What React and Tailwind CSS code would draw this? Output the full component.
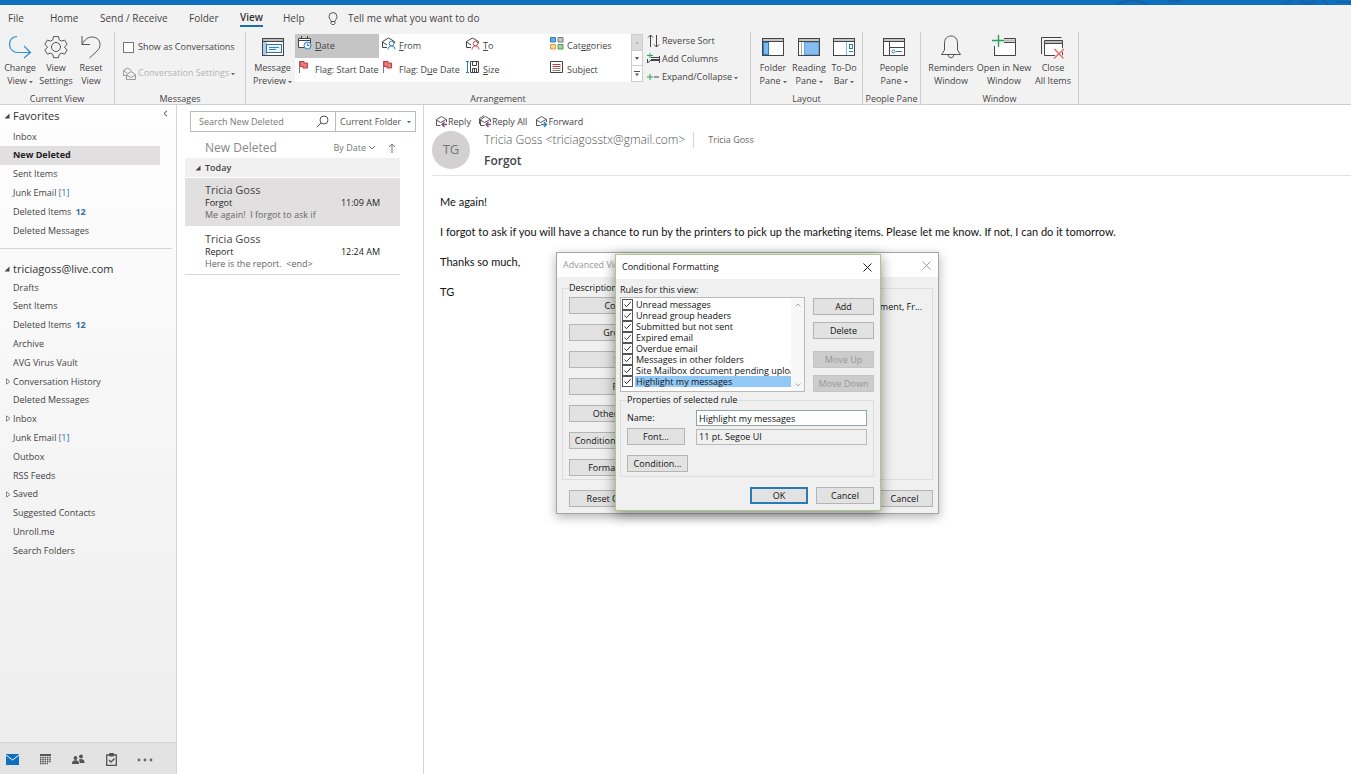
import React from "react";

const favorites = [
  { name: "Inbox" },
  { name: "New Deleted", active: true },
  { name: "Sent Items" },
  { name: "Junk Email", draft: "[1]" },
  { name: "Deleted Items", unread: "12" },
  { name: "Deleted Messages" },
];

const accountFolders = [
  { name: "Drafts" },
  { name: "Sent Items" },
  { name: "Deleted Items", unread: "12" },
  { name: "Archive" },
  { name: "AVG Virus Vault" },
  { name: "Conversation History", expandable: true },
  { name: "Deleted Messages" },
  { name: "Inbox", expandable: true },
  { name: "Junk Email", draft: "[1]" },
  { name: "Outbox" },
  { name: "RSS Feeds" },
  { name: "Saved", expandable: true },
  { name: "Suggested Contacts" },
  { name: "Unroll.me" },
  { name: "Search Folders" },
];

const messages = [
  {
    from: "Tricia Goss",
    subject: "Forgot",
    time: "11:09 AM",
    preview: "Me again!  I forgot to ask if",
    active: true,
  },
  {
    from: "Tricia Goss",
    subject: "Report",
    time: "12:24 AM",
    preview: "Here is the report.  <end>",
  },
];

const rules = [
  "Unread messages",
  "Unread group headers",
  "Submitted but not sent",
  "Expired email",
  "Overdue email",
  "Messages in other folders",
  "Site Mailbox document pending upload",
  "Highlight my messages",
];

const viewSettings = [
  "Columns...",
  "Group By...",
  "Sort...",
  "Filter...",
  "Other Settings...",
  "Conditional Formatting...",
  "Format Columns...",
];

const Caret = () => (
  <svg className="ml-0.5 inline-block h-1 w-1" viewBox="0 0 4 4">
    <path d="M0 1h4L2 3.2z" fill="#666" />
  </svg>
);

/* ---------- ribbon icons ---------- */

const ChangeViewIcon = () => (
  <svg width="24" height="24" viewBox="0 0 24 24" fill="none" stroke="#2f8fcf" strokeWidth="1.200">
    <path d="M9 1.500C4 2 1.500 5.500 1.500 9.500c0 5 4 8 8.500 8h12M16 11l6.500 6.500L16 23" />
  </svg>
);

const GearIcon = () => (
  <svg width="24" height="24" viewBox="0 0 24 24" fill="none" stroke="#555">
    <path
      strokeLinejoin="round"
      d="M9.500 1.500h5l.7 3.300 2.300 1.300 3.200-1 2.500 4.300-2.500 2.200v1l2.500 2.200-2.500 4.300-3.200-1-2.300 1.300-.7 3.300h-5l-.7-3.300-2.300-1.300-3.200 1L.8 14.800l2.500-2.200v-1L.8 9.400l2.500-4.300 3.200 1 2.300-1.300z"
    />
    <circle cx="12" cy="12" r="4.500" />
  </svg>
);

const ResetIcon = () => (
  <svg width="24" height="24" viewBox="0 0 24 24" fill="none" stroke="#555">
    <path d="M3 1v8.500h8M3 9.500C6 4 9 2 13.500 2 18 2 21 5.500 21 9.500c0 3-1 4.500-3 6.500l-7.500 7" />
  </svg>
);

const PreviewIcon = () => (
  <svg width="24" height="24" viewBox="0 0 24 24" fill="none" stroke="#444">
    <rect x="1.500" y="3.500" width="21" height="17" fill="#fff" />
    <path d="M2 4h20v2.500H2z" fill="#bbb" stroke="none" />
    <path d="M1.500 6.500h21" />
    <path d="M2 7h4v13H2z" fill="#a9cdee" stroke="none" />
    <rect x="5.500" y="9.500" width="15" height="8" fill="#e9f4fc" stroke="#3d6f93" />
    <path d="M8 12.500h10M8 14.500h7" stroke="#2b8cc4" />
  </svg>
);

const PaneIcon = ({ kind }) => (
  <svg width="24" height="24" viewBox="0 0 24 24" fill="none" stroke="#444">
    <rect x="1.500" y="3.500" width="21" height="17" fill="#fff" />
    <path d="M2 4h20v2.500H2z" fill="#c4c4c4" stroke="none" />
    <path d="M1.500 6.500h21" />
    {kind === "folder" && (
      <rect x="2.500" y="7.500" width="5" height="12" fill="#7cb7ee" stroke="#2b7fc0" />
    )}
    {kind === "reading" && (
      <g stroke="#69a5da">
        <rect x="7.500" y="7.500" width="14" height="12" fill="#85bdf2" />
        <path d="M4.500 7v13" stroke="#aaa" />
      </g>
    )}
    {kind === "todo" && (
      <g stroke="#2f7f9f">
        <path d="M14.500 7v13" stroke="#7cb7ee" />
        <rect x="17.500" y="9.500" width="3" height="4" />
        <path d="M17 16.500h4" />
      </g>
    )}
    {kind === "people" && (
      <g>
        <path d="M7.500 7v13M8 12.500h14" />
        <circle cx="11.500" cy="16.500" r="1.500" stroke="#2b7fc0" />
        <path d="M14 16.500h6" stroke="#2b7fc0" />
      </g>
    )}
  </svg>
);

const BellIcon = () => (
  <svg width="24" height="24" viewBox="0 0 24 24" fill="none" stroke="#555">
    <path
      strokeLinejoin="round"
      d="M2.500 19.500h19l-3-4.500V8c0-4-2.500-7-6.500-7S5.500 4 5.500 8v7zM9 19.800c.3 1.800 1.500 3 3 3s2.700-1.200 3-3"
    />
  </svg>
);

const NewWindowIcon = () => (
  <svg width="26" height="24" viewBox="0 0 26 24" fill="none" stroke="#444">
    <path d="M3.500 20.500V10h9V7h11.500v13z" fill="#fff" stroke="none" />
    <path d="M13 5.500h11" stroke="#bbb" strokeWidth="2" />
    <path d="M13 7.500h11.500M3.500 20.500V11M3 20.500h21.500v-17H13" />
    <path d="M7.500 0v12M1 5.500h12" stroke="#27a35a" strokeWidth="1.400" />
  </svg>
);

const CloseAllIcon = () => (
  <svg width="26" height="24" viewBox="0 0 26 24" fill="none" stroke="#444">
    <path d="M1.500 19V2.500h20" />
    <path d="M4.500 5.500h18v15h-18z" fill="#fff" />
    <path d="M5 6h17v2.500H5z" fill="#bbb" stroke="none" />
    <path d="M4.500 8.500h18" />
    <path d="M14.500 13.500l9 10M24 13.500l-10 10" stroke="#f3f2f2" strokeWidth="3" />
    <path d="M14.500 14l9 9.500M24 14l-10 9.500" stroke="#e2706c" strokeWidth="1.300" />
  </svg>
);

const DateIcon = () => (
  <svg width="14" height="14" viewBox="0 0 14 14" fill="none" stroke="#444">
    <path d="M.5 2.500h12v9H.5z" fill="#fff" />
    <path d="M.5 4.500h12M3.500 0v3M9.500 0v3" />
    <circle cx="9.500" cy="9.500" r="3.500" fill="#e8f3fb" stroke="#2b7fc0" />
    <path d="M9.500 7.500v2h2" stroke="#2b7fc0" />
  </svg>
);

const PersonMailIcon = ({ color }) => (
  <svg width="14" height="13" viewBox="0 0 14 13" fill="none" stroke="#444">
    <path d="M5 10.500H.5V4.500L6.500 1l6 3.500V6M.5 5L5 8" />
    <circle cx="9.500" cy="6.500" r="2.300" fill="#fff" stroke={color} />
    <path d="M6 12.500c0-2 1.500-3.500 3.500-3.500s3.500 1.500 3.500 3.500" stroke={color} />
  </svg>
);

const CategoriesIcon = () => (
  <svg width="14" height="13" viewBox="0 0 14 13">
    <path d="M.5.5h5v4.500h-5z" fill="#6aabde" stroke="#2b7fc0" />
    <path d="M8 .5h5v4.500H8z" fill="#c9c9c9" stroke="#777" />
    <path d="M.5 7.500h5V12h-5z" fill="#f8d79a" stroke="#d99a3e" />
    <path d="M8 7.500h5V12H8z" fill="#a5d39b" stroke="#4f9a55" />
  </svg>
);

const FlagIcon = () => (
  <svg width="14" height="14" viewBox="0 0 14 14" fill="none">
    <path d="M1.500 1v12" stroke="#777" />
    <path d="M2 1.500h4v1.500h3.500V8H5V6.500H2z" fill="#ea7a7a" stroke="#c53a3f" />
  </svg>
);

const SizeIcon = () => (
  <svg width="14" height="14" viewBox="0 0 14 14" fill="none">
    <path d="M1.500 2v10" stroke="#2b7fc0" />
    <path d="M0 1.500h3M0 12.500h3" stroke="#2b7fc0" />
    <path d="M4.500 1.500h8v11h-8z" fill="#fff" stroke="#444" />
    <path d="M6.500 2v3.500h4V2M6.500 12V8.500h4V12M8.500 9v3" stroke="#444" />
  </svg>
);

const SubjectIcon = () => (
  <svg width="14" height="13" viewBox="0 0 14 13" fill="none">
    <path d="M.5.5h12v11H.5z" fill="#fff" stroke="#444" />
    <path d="M2.500 3.500h8M2.500 5.500h8" stroke="#c53a3f" />
    <path d="M2.500 7.500h8M2.500 9.500h8" stroke="#888" />
  </svg>
);

const SortIcon = () => (
  <svg width="13" height="14" viewBox="0 0 13 14" fill="none" stroke="#444">
    <path d="M3.500 13V1M1 3.500L3.500 1 6 3.500M9.500 1v12M7 10.500L9.500 13 12 10.500" />
  </svg>
);

const AddColumnsIcon = () => (
  <svg width="13" height="12" viewBox="0 0 13 12" fill="none">
    <path d="M4 4.500h8M4 6.500h8M1 9.500l2.500-2H12M12.500 3v7M.5 6v4" stroke="#444" />
    <path d="M3 0v5M0 2.500h6" stroke="#27a35a" />
  </svg>
);

const PlusMinusIcon = () => (
  <svg width="13" height="8" viewBox="0 0 13 8" fill="none">
    <path d="M3 1v6M0 4h6" stroke="#27a35a" />
    <path d="M7 4h5" stroke="#444" />
  </svg>
);

const ConversationIcon = () => (
  <svg width="13" height="13" viewBox="0 0 13 13" fill="none" stroke="#999">
    <path d="M3 8.500H.5V3.500L4.500 1l4 2.500M1 4l3 2" />
    <path d="M3.500 7.500L8 4.500l4.500 3v5h-9zM3.500 8L8 10.500 12.500 8" />
  </svg>
);

const MailActionIcon = ({ color, double, forward }) => (
  <svg width="13" height="13" viewBox="0 0 13 13" fill="none" stroke="#555">
    <path d="M5.500 10.500h-4V4.500L6.500 1.500l5 3V7M1.500 5l4 2.500 5.500-3" />
    {double && <path d="M.5 9V3.500L5 .5" />}
    {forward ? (
      <path d="M6 9.500h5M9 7l2.500 2.500L9 12" stroke={color} strokeWidth="1.300" />
    ) : (
      <path d="M12 9.500H7.500M9.500 7L7 9.500 9.500 12" stroke={color} strokeWidth="1.300" />
    )}
  </svg>
);

/* ---------- ribbon ---------- */

const RibbonGroup = ({ label, className, children }) => (
  <div
    className={`flex shrink-0 flex-col border-r border-[#cfcece] ${className}`}
  >
    <div className="flex h-[56px]">{children}</div>
    <div className="mt-auto whitespace-nowrap text-center text-[9px] leading-[11px] text-[#444]">
      {label}
    </div>
  </div>
);

const BigButton = ({ icon, line1, line2, caret, className = "w-9" }) => (
  <button
    className={`flex shrink-0 flex-col items-center whitespace-nowrap text-[9px] leading-[13px] text-[#444] ${className}`}
  >
    <span className="flex h-[29px] items-center">{icon}</span>
    <span>{line1}</span>
    <span>
      {line2}
      {caret && <Caret />}
    </span>
  </button>
);

const GalleryItem = ({ icon, children, active }) => (
  <button
    className={`flex items-center gap-[3px] whitespace-nowrap pl-[3px] text-left text-[9px] text-[#444] ${
      active ? "bg-[#c6c5c5]" : ""
    }`}
  >
    <span className="shrink-0 pb-1.5">{icon}</span>
    <span>{children}</span>
  </button>
);

const Ribbon = () => (
  <div className="flex h-[74px] border-b border-[#d0cfcf] bg-[#f3f2f2] pt-px">
    <RibbonGroup label="Current View" className="w-[115px]">
      <div className="flex">
        <BigButton icon={<ChangeViewIcon />} line1="Change" line2="View" caret className="w-10" />
        <BigButton icon={<GearIcon />} line1="View" line2="Settings" className="w-8" />
        <BigButton icon={<ResetIcon />} line1="Reset" line2="View" className="w-[38px]" />
      </div>
    </RibbonGroup>

    <RibbonGroup label="Messages" className="w-[131px]">
      <div className="flex flex-col gap-3 pl-2 pt-2 text-[9px] leading-[14px]">
        <label className="flex items-center gap-1 whitespace-nowrap text-[#444]">
          <input
            type="checkbox"
            className="h-[11px] w-[11px] appearance-none border border-[#777] bg-white"
          />
          Show as Conversations
        </label>
        <button
          disabled
          className="flex items-center gap-0.5 whitespace-nowrap text-[#b3b2b2]"
        >
          <ConversationIcon />
          <span>
            Conversation Settings
            <Caret />
          </span>
        </button>
      </div>
    </RibbonGroup>

    <RibbonGroup label="Arrangement" className="w-[505px]">
      <BigButton
        icon={<PreviewIcon />}
        line1="Message"
        line2="Preview"
        caret
        className="ml-1 w-[45px]"
      />
      <div className="mt-0.5 flex h-12 bg-white">
        <div className="grid grid-cols-[84px_84px_84px_84px] grid-rows-2">
          <GalleryItem icon={<DateIcon />} active>
            <u>D</u>ate
          </GalleryItem>
          <GalleryItem icon={<PersonMailIcon color="#2b7fc0" />}>
            <u>F</u>rom
          </GalleryItem>
          <GalleryItem icon={<PersonMailIcon color="#d9484e" />}>
            <u>T</u>o
          </GalleryItem>
          <GalleryItem icon={<CategoriesIcon />}>
            Cat<u>e</u>gories
          </GalleryItem>
          <GalleryItem icon={<FlagIcon />}>
            Fla<u>g</u>: Start Date
          </GalleryItem>
          <GalleryItem icon={<FlagIcon />}>
            Flag: D<u>u</u>e Date
          </GalleryItem>
          <GalleryItem icon={<SizeIcon />}>
            <u>S</u>ize
          </GalleryItem>
          <GalleryItem icon={<SubjectIcon />}>
            Sub<u>j</u>ect
          </GalleryItem>
        </div>
        <div className="flex w-3 flex-col border border-[#cfcece]">
          <button
            aria-label="Scroll up"
            className="flex flex-1 items-center justify-center bg-[#dcdbdb]"
          >
            <svg width="4" height="3" viewBox="0 0 4 3">
              <path d="M0 3h4L2 0z" fill="#bbb" />
            </svg>
          </button>
          <button
            aria-label="Scroll down"
            className="flex flex-1 items-center justify-center border-y border-[#cfcece]"
          >
            <svg width="4" height="3" viewBox="0 0 4 3">
              <path d="M0 0h4L2 3z" fill="#555" />
            </svg>
          </button>
          <button aria-label="More" className="flex flex-1 items-center justify-center">
            <svg width="6" height="6" viewBox="0 0 6 6">
              <path d="M0 .5h6" stroke="#555" />
              <path d="M1 2.500h4L3 5z" fill="#555" />
            </svg>
          </button>
        </div>
      </div>
      <div className="ml-1 flex flex-col text-[9px] leading-[18px] text-[#444]">
        <button className="flex items-center gap-0.5 whitespace-nowrap">
          <SortIcon />
          Reverse Sort
        </button>
        <button className="flex items-center gap-0.5 whitespace-nowrap">
          <AddColumnsIcon />
          Add Columns
        </button>
        <button className="flex items-center gap-0.5 whitespace-nowrap">
          <PlusMinusIcon />
          <span>
            Expand/Collapse
            <Caret />
          </span>
        </button>
      </div>
    </RibbonGroup>

    <RibbonGroup label="Layout" className="w-[112px]">
      <div className="flex pl-1">
        <BigButton icon={<PaneIcon kind="folder" />} line1="Folder" line2="Pane" caret />
        <BigButton icon={<PaneIcon kind="reading" />} line1="Reading" line2="Pane" caret />
        <BigButton
          icon={<PaneIcon kind="todo" />}
          line1="To-Do"
          line2="Bar"
          caret
          className="w-[34px]"
        />
      </div>
    </RibbonGroup>

    <RibbonGroup label="People Pane" className="w-[58px]">
      <BigButton
        icon={<PaneIcon kind="people" />}
        line1="People"
        line2="Pane"
        caret
        className="ml-2 w-[46px]"
      />
    </RibbonGroup>

    <RibbonGroup label="Window" className="w-[158px]">
      <BigButton icon={<BellIcon />} line1="Reminders" line2="Window" className="ml-1 w-[52px]" />
      <BigButton icon={<NewWindowIcon />} line1="Open in New" line2="Window" className="w-[54px]" />
      <BigButton icon={<CloseAllIcon />} line1="Close" line2="All Items" className="w-[44px]" />
    </RibbonGroup>
  </div>
);

const TitleBar = () => (
  <div className="flex h-[5px] justify-end bg-[#106ebe]">
    <svg width="236" height="5" viewBox="0 0 236 5" fill="none" stroke="#1263a8" strokeWidth="2">
      <path d="M2 5c6-6 24-6 30 0M52 1h14M168 5l8-5M186 1c4 4 10 4 14 0M208 0l6 5M222 2h14" />
    </svg>
  </div>
);

const TabBar = () => (
  <nav className="flex h-[26px] items-center bg-[#f3f2f2] pl-2 text-[10px] text-[#444]">
    <a href="#file" className="w-[42px]">File</a>
    <a href="#home" className="w-[50px]">Home</a>
    <a href="#send" className="w-[89px] whitespace-nowrap">Send / Receive</a>
    <a href="#folder" className="w-[51px]">Folder</a>
    <a
      href="#view"
      className="flex h-[18px] items-center border-b-2 border-[#1a6fb0] font-semibold text-[#333]"
    >
      View
    </a>
    <a href="#help" className="ml-5 w-[45px]">Help</a>
    <svg width="10" height="13" viewBox="0 0 10 13" fill="none" stroke="#555">
      <path d="M3 9.500C3 7.500 1 7 1 4.500A4 4 0 015 .6a4 4 0 014 3.900C9 7 7 7.500 7 9.500zM3 10v1.500l1 1h2l1-1V10" />
    </svg>
    <button className="ml-2.5 whitespace-nowrap">Tell me what you want to do</button>
  </nav>
);

/* ---------- folder pane ---------- */

const FolderRow = ({ folder }) => (
  <a
    href="#folder"
    className={`mr-4 flex items-center whitespace-nowrap text-[9px] ${
      folder.active ? "bg-[#e1dfdf] font-bold text-[#222]" : "text-[#444]"
    }`}
  >
    <span className="flex w-[13px] shrink-0 pl-1.5">
      {folder.expandable && (
        <svg width="5" height="7" viewBox="0 0 5 7" fill="none" stroke="#888">
          <path d="M.5.8v5.400L4 3.500z" />
        </svg>
      )}
    </span>
    {folder.name}
    {folder.draft && <span className="ml-0.5 text-[#35719c]">{folder.draft}</span>}
    {folder.unread && (
      <span className="ml-1 font-bold text-[#35719c]">{folder.unread}</span>
    )}
  </a>
);

const SectionHeader = ({ children }) => (
  <h2 className="flex items-center gap-[3px] pl-1 text-[11px] leading-4 text-[#333]">
    <svg width="6" height="6" viewBox="0 0 6 6">
      <path d="M5.500.5v5h-5z" fill="#444" />
    </svg>
    {children}
  </h2>
);

const FolderPane = () => (
  <aside className="flex w-[177px] shrink-0 flex-col border-r border-[#d6d5d5] bg-linear-to-b from-[#fefefe] to-[#eeeded]">
    <div className="flex items-start justify-between pr-2 pt-[3px]">
      <SectionHeader>Favorites</SectionHeader>
      <button aria-label="Minimize folder pane" className="pt-0.5">
        <svg width="5" height="7" viewBox="0 0 5 7" fill="none" stroke="#444">
          <path d="M4 .8L1 3.500 4 6.200" />
        </svg>
      </button>
    </div>
    <nav className="mt-[3px] grid h-[113px] auto-rows-fr">
      {favorites.map((f) => (
        <FolderRow key={f.name} folder={f} />
      ))}
    </nav>
    <div className="mr-1 mt-2 border-t border-[#d6d5d5]" />
    <div className="mt-3">
      <SectionHeader>triciagoss@live.com</SectionHeader>
    </div>
    <nav className="mt-px grid h-[282px] auto-rows-fr">
      {accountFolders.map((f) => (
        <FolderRow key={f.name} folder={f} />
      ))}
    </nav>
    <div className="mt-auto flex h-8 items-center gap-5 border-t border-[#d8d7d7] bg-[#e4e3e3] pl-1.5 pt-0.5">
      <button aria-label="Mail">
        <svg width="13" height="11" viewBox="0 0 13 11">
          <path d="M0 0h13v11H0z" fill="#106ebe" />
          <path d="M0 1l6.500 5L13 1" fill="none" stroke="#fff" />
        </svg>
      </button>
      <button aria-label="Calendar">
        <svg width="13" height="11" viewBox="0 0 13 11" stroke="#555" fill="none">
          <path d="M1 1h11" strokeWidth="2" />
          <path
            d="M1 3.500h11M1 5.500h11M1 7.500h11M1 9.500h8"
            strokeDasharray="1.500 .8"
            strokeWidth="1.300"
          />
        </svg>
      </button>
      <button aria-label="People">
        <svg width="13" height="11" viewBox="0 0 13 11" fill="#555">
          <circle cx="3.500" cy="4" r="1.900" />
          <path d="M0 10c0-3 1.500-3.700 3.500-3.700S7 7 7 10z" />
          <circle cx="9" cy="2.500" r="1.900" />
          <path d="M7 5.500c1-.8 5-1.200 5.500 2.500v1H7.800z" />
        </svg>
      </button>
      <button aria-label="Tasks">
        <svg width="12" height="13" viewBox="0 0 12 13" fill="none" stroke="#555">
          <path d="M4 2H1.700v10.300h9.600V2H9" strokeWidth="1.300" />
          <path d="M4.500.5h4V3h-4z" fill="#555" />
          <path d="M4 7l2 2 3.500-3.500" strokeWidth="1.300" />
        </svg>
      </button>
      <button aria-label="More">
        <svg width="16" height="4" viewBox="0 0 16 4" fill="#666">
          <circle cx="2" cy="2" r="1.400" />
          <circle cx="8" cy="2" r="1.400" />
          <circle cx="14" cy="2" r="1.400" />
        </svg>
      </button>
    </div>
  </aside>
);

/* ---------- message list ---------- */

const MessageList = () => (
  <section className="flex w-[247px] shrink-0 flex-col border-r border-[#d6d5d5] bg-white pl-2 pr-[23px]">
    <div className="-mr-4 ml-[5px] mt-1.5 flex h-[21px] border border-[#b5bdbb] text-[9px]">
      <input
        aria-label="Search"
        placeholder="Search New Deleted"
        className="min-w-0 flex-1 pl-2 outline-none placeholder:text-[#777]"
      />
      <button aria-label="Search" className="pr-1.5">
        <svg width="13" height="13" viewBox="0 0 13 13" fill="none" stroke="#555">
          <circle cx="8" cy="5" r="4" />
          <path d="M5 8L.8 12.200" />
        </svg>
      </button>
      <button className="flex w-20 items-center justify-between whitespace-nowrap border-l border-[#b5bdbb] px-1 text-[#555]">
        Current Folder <Caret />
      </button>
    </div>
    <div className="flex h-[26px] items-center pl-5 pt-1.5 text-[#777]">
      <h1 className="flex-1 text-[12px] text-[#888]">New Deleted</h1>
      <button className="flex items-center gap-0.5 text-[9px]">
        By Date
        <svg width="8" height="6" viewBox="0 0 8 6" fill="none" stroke="#777">
          <path d="M1 1l3 3 3-3" />
        </svg>
      </button>
      <button aria-label="Sort ascending" className="ml-3 mr-1">
        <svg width="8" height="10" viewBox="0 0 8 10" fill="none" stroke="#777">
          <path d="M4 10V1M1 4l3-3 3 3" />
        </svg>
      </button>
    </div>
    <h2 className="flex h-[19px] items-center gap-1 bg-[#f1f0f0] pl-2.5 text-[9px] font-semibold text-[#444]">
      <svg width="6" height="6" viewBox="0 0 6 6">
        <path d="M5.500.5v5h-5z" fill="#444" />
      </svg>
      Today
    </h2>
    {messages.map((m) => (
      <article
        key={m.subject}
        className={`mt-px flex h-12 flex-col justify-center border-b pl-5 text-[9px] leading-3 ${
          m.active ? "border-[#e1dfdf] bg-[#e1dfdf]" : "border-[#d6d5d5]"
        }`}
      >
        <div className="text-[11px] leading-[14px] text-[#444]">{m.from}</div>
        <div className="flex justify-between pr-5 font-medium text-[#222]">
          <span>{m.subject}</span>
          <span>{m.time}</span>
        </div>
        <div className="whitespace-pre text-[#666]">{m.preview}</div>
      </article>
    ))}
  </section>
);

/* ---------- reading pane ---------- */

const ReadingPane = () => (
  <main className="min-w-0 flex-1 bg-white">
    <div className="flex h-6 items-end gap-2 pl-[11px] text-[9px] leading-[15px] text-[#444]">
      <button className="flex items-center">
        <MailActionIcon color="#8a4a8f" />
        Reply
      </button>
      <button className="flex items-center">
        <MailActionIcon color="#8a4a8f" double />
        Reply All
      </button>
      <button className="flex items-center">
        <MailActionIcon color="#2b7fc0" forward />
        Forward
      </button>
    </div>
    <header className="ml-2 flex h-[47px] items-start border-b border-[#e4e3e3] pt-0.5">
      <div className="flex h-[38px] w-[38px] items-center justify-center rounded-full bg-[#d2d0d1] text-[13px] text-[#777]">
        TG
      </div>
      <div className="ml-3.5 whitespace-nowrap">
        <div className="flex items-center">
          <span className="text-[12px] font-light leading-[18px] text-[#555]">
            Tricia Goss &lt;triciagosstx@gmail.com&gt;
          </span>
          <span className="ml-2 h-4 border-l border-[#d6d5d5]" />
          <span className="ml-3.5 text-[9px] text-[#666]">Tricia Goss</span>
        </div>
        <h2 className="mt-0.5 text-[12px] font-semibold leading-5 text-[#444]">Forgot</h2>
      </div>
    </header>
    <div className="flex flex-col gap-3.5 pl-4 pt-[18px] font-['Lato',sans-serif] text-[11px] leading-4 text-[#111]">
      <p>Me again!</p>
      <p>
        I forgot to ask if you will have a chance to run by the printers to pick
        up the marketing items. Please let me know. If not, I can do it
        tomorrow.
      </p>
      <p>Thanks so much,</p>
      <p>TG</p>
    </div>
  </main>
);

/* ---------- dialogs ---------- */

const DialogButton = ({ children, className = "", ...props }) => (
  <button
    className={`h-[17px] whitespace-nowrap border border-[#b4b4b4] bg-[#e3e2e2] text-center text-[9px] leading-[15px] disabled:border-[#c4c4c4] disabled:bg-[#cdcccc] disabled:text-[#979797] ${className}`}
    {...props}
  >
    {children}
  </button>
);

const CloseIcon = ({ color }) => (
  <svg width="9" height="9" viewBox="0 0 9 9" fill="none" stroke={color}>
    <path d="M.5.5l8 8M8.500.5l-8 8" />
  </svg>
);

const AdvancedViewDialog = () => (
  <div
    role="dialog"
    aria-label="Advanced View Settings"
    className="absolute left-[556px] top-[252px] flex h-[262px] w-[383px] flex-col border border-[#a5a5a5] bg-[#f0f0f0] text-[9px] text-[#111] shadow-[0_3px_10px_rgba(0,0,0,0.3)]"
  >
    <div className="flex h-6 items-center justify-between bg-white pl-1.5 pr-[7px] text-[#999]">
      Advanced View Settings: Compact
      <button aria-label="Close">
        <CloseIcon color="#999" />
      </button>
    </div>
    <fieldset className="mx-[5px] mt-[5px] flex h-[198px] border border-[#dcdcdc] px-1.5">
      <legend className="leading-3">Description</legend>
      <div className="flex flex-col gap-[10px] pt-[3px]">
        {viewSettings.map((s) => (
          <DialogButton key={s} className="w-[115px]">
            {s}
          </DialogButton>
        ))}
      </div>
      <p className="flex-1 overflow-hidden whitespace-nowrap pr-1 pt-1.5 text-right">
        Importance, Reminder, Icon, Attachment, Fr...
      </p>
    </fieldset>
    <div className="mt-2.5 flex justify-between pl-3 pr-[5px]">
      <DialogButton className="w-[115px]">Reset Current View</DialogButton>
      <DialogButton className="w-[57px]">Cancel</DialogButton>
    </div>
  </div>
);

const RuleRow = ({ name, selected }) => (
  <label className="flex h-[11px] items-center">
    <span className="grid w-[13px] shrink-0">
      <input
        type="checkbox"
        defaultChecked
        className="col-start-1 row-start-1 h-[11px] w-[11px] appearance-none border border-[#555] bg-white"
      />
      <svg
        className="pointer-events-none col-start-1 row-start-1"
        width="11"
        height="11"
        viewBox="0 0 11 11"
        fill="none"
        stroke="#333"
      >
        <path d="M2.500 5.500l2 2.200L8.800 3" />
      </svg>
    </span>
    <span
      className={`flex-1 overflow-hidden whitespace-nowrap pl-px leading-[11px] ${
        selected ? "bg-[#91c8f6]" : ""
      }`}
    >
      {name}
    </span>
  </label>
);

const ConditionalFormattingDialog = () => (
  <div
    role="dialog"
    aria-label="Conditional Formatting"
    className="absolute left-[615px] top-[254px] flex h-[257px] w-[266px] flex-col border border-[#aec48a] bg-[#f0f0f0] text-[9px] text-[#111] shadow-[0_3px_12px_rgba(0,0,0,0.45)]"
  >
    <div className="flex h-6 items-center justify-between bg-white pl-1.5 pr-2">
      Conditional Formatting
      <button aria-label="Close">
        <CloseIcon color="#222" />
      </button>
    </div>
    <div className="mt-1 flex flex-col pl-1 pr-1.5">
      <div className="leading-[14px]">Rules for this view:</div>
      <div className="flex items-start justify-between">
        <div className="flex h-[95px] w-[185px] justify-between border border-[#b9b9b9] bg-white pl-px pt-px">
          <div className="flex min-w-0 flex-1 flex-col">
            {rules.map((r, i) => (
              <RuleRow key={r} name={r} selected={i === rules.length - 1} />
            ))}
          </div>
          <div className="flex w-[13px] shrink-0 flex-col items-center justify-between bg-[#f7f7f7] py-1">
            <svg width="6" height="4" viewBox="0 0 6 4" fill="none" stroke="#aaa">
              <path d="M.5 3.500L3 1l2.500 2.500" />
            </svg>
            <svg width="6" height="4" viewBox="0 0 6 4" fill="none" stroke="#aaa">
              <path d="M.5.5L3 3 5.500.5" />
            </svg>
          </div>
        </div>
        <div className="flex w-[61px] flex-col pt-px">
          <DialogButton>Add</DialogButton>
          <DialogButton className="mt-[7px]">Delete</DialogButton>
          <DialogButton className="mt-3" disabled>
            Move Up
          </DialogButton>
          <DialogButton className="mt-[7px]" disabled>
            Move Down
          </DialogButton>
        </div>
      </div>
      <fieldset className="mt-0.5 flex flex-col border border-[#dcdcdc] px-1.5 pb-1">
        <legend className="leading-3">Properties of selected rule</legend>
        <div className="mt-1 grid grid-cols-[69px_1fr] items-center gap-y-0.5">
          <label htmlFor="rule-name">Name:</label>
          <input
            id="rule-name"
            defaultValue="Highlight my messages"
            className="h-4 min-w-0 border border-[#8fa3ad] bg-white px-0.5"
          />
          <DialogButton className="w-[58px]">Font...</DialogButton>
          <input
            aria-label="Font"
            readOnly
            value="11 pt. Segoe UI"
            className="h-4 min-w-0 border border-[#b9b9b9] px-0.5"
          />
        </div>
        <DialogButton className="mt-2.5 w-[61px]">Condition...</DialogButton>
      </fieldset>
      <div className="mt-2.5 flex justify-end gap-2">
        <button className="h-[17px] w-[58px] border-2 border-[#2a7ab8] bg-[#e3e2e2] text-center leading-[13px]">
          OK
        </button>
        <DialogButton className="w-[58px]">Cancel</DialogButton>
      </div>
    </div>
  </div>
);

const App = () => {
  return (
    <div className="relative flex min-h-screen flex-col bg-white font-['Open_Sans','Noto_Sans',sans-serif]">
      <TitleBar />
      <TabBar />
      <Ribbon />
      <div className="flex flex-1">
        <FolderPane />
        <MessageList />
        <ReadingPane />
      </div>
      <AdvancedViewDialog />
      <ConditionalFormattingDialog />
    </div>
  );
};

export default App;
